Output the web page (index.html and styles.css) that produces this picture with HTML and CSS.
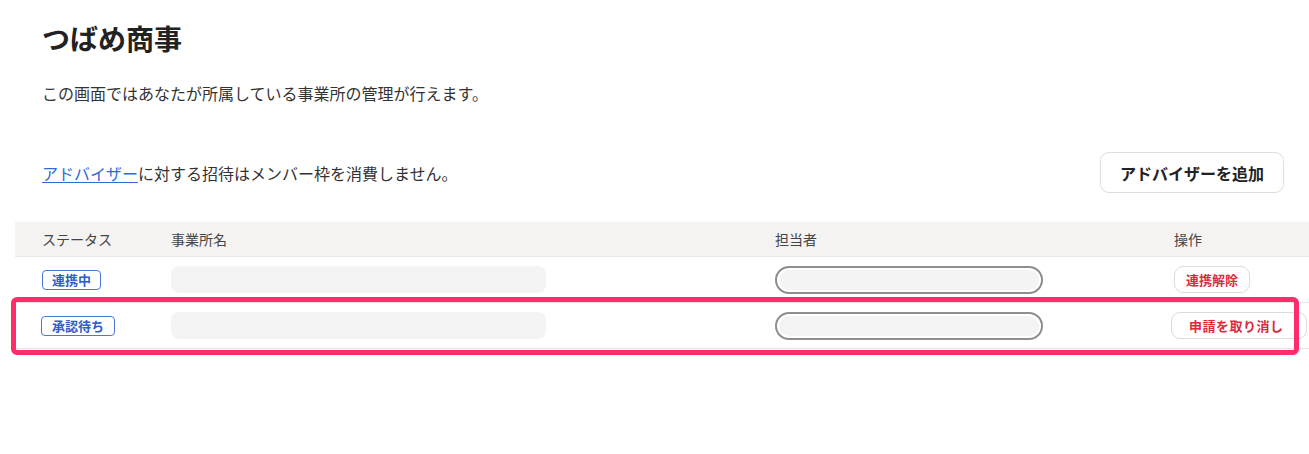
FILE: index.html
```html
<!DOCTYPE html>
<html lang="ja">
<head>
<meta charset="utf-8">
<title>つばめ商事</title>
<link rel="stylesheet" href="styles.css">
</head>
<body>
<div class="page">
  <div class="intro">
    <h1 class="title">つばめ商事</h1>
    <p class="desc">この画面ではあなたが所属している事業所の管理が行えます。</p>
    <div class="toolbar">
      <p class="note"><a class="link" href="#">アドバイザー</a>に対する招待はメンバー枠を消費しません。</p>
      <button class="btn-add" type="button">アドバイザーを追加</button>
    </div>
  </div>
  <div class="table">
    <div class="row head">
      <div class="cell c-status">ステータス</div>
      <div class="cell c-name">事業所名</div>
      <div class="cell c-person">担当者</div>
      <div class="cell c-ops">操作</div>
    </div>
    <div class="row">
      <div class="cell c-status"><span class="badge">連携中</span></div>
      <div class="cell c-name"><span class="ph-name"></span></div>
      <div class="cell c-person"><span class="ph-person"></span></div>
      <div class="cell c-ops"><button class="btn-danger" type="button">連携解除</button></div>
    </div>
    <div class="row-wrap">
      <div class="row">
        <div class="cell c-status"><span class="badge badge-wide">承認待ち</span></div>
        <div class="cell c-name"><span class="ph-name"></span></div>
        <div class="cell c-person"><span class="ph-person"></span></div>
        <div class="cell c-ops"><button class="btn-danger btn-cancel" type="button">申請を取り消し</button></div>
      </div>
      <div class="annot"></div>
    </div>
  </div>
</div>
</body>
</html>
```
FILE: styles.css
```css
* { box-sizing: border-box; }
html, body { margin: 0; padding: 0; background: #fff; }
body {
  font-family: "Noto Sans CJK JP", "Noto Sans", sans-serif;
  color: #333;
}
.page { padding-top: 17px; padding-bottom: 40px; }
.intro { padding: 0 25px 0 42px; }
.title {
  margin: 0;
  font-size: 28px;
  line-height: 42px;
  font-weight: 700;
  color: #222;
}
.desc {
  margin: 22px 0 0;
  font-size: 16px;
  line-height: 24px;
  color: #333;
}
.toolbar {
  margin-top: 47px;
  display: flex;
  align-items: center;
  justify-content: space-between;
}
.note {
  margin: 0;
  font-size: 16px;
  line-height: 24px;
  color: #333;
}
.link { color: #2f6ad6; text-decoration: underline; text-underline-offset: 2px; }
.btn-add {
  height: 41px;
  padding: 0 19px;
  border: 1px solid #dedede;
  border-radius: 9px;
  background: #fff;
  font-family: inherit;
  font-size: 16px;
  font-weight: 700;
  color: #222;
  display: flex;
  align-items: center;
}
.table { margin: 29px 0 0 15px; }
.row {
  display: grid;
  grid-template-columns: 155px 605px 398px 1fr;
  align-items: center;
  height: 46px;
  border-bottom: 1px solid #e7e7e7;
}
.row.head {
  height: 35px;
  background: #f5f3f2;
  border-bottom: 1px solid #ebe8e6;
  font-size: 14px;
  color: #444;
}
.cell { display: flex; align-items: center; }
.c-status { padding-left: 27px; }
.c-name { padding-left: 1px; }
.c-ops { padding-left: 1px; }
.badge {
  display: inline-flex;
  align-items: center;
  height: 20px;
  padding: 0 9px;
  border: 1px solid #4a76d6;
  border-radius: 4px;
  font-size: 13px;
  font-weight: 700;
  color: #2f5ccb;
}
.badge-wide { margin-left: -1px; padding: 0 10px; }
.ph-name {
  display: block;
  width: 375px;
  height: 27px;
  border-radius: 8px;
  background: #f4f4f4;
}
.ph-person {
  display: block;
  width: 268px;
  height: 28px;
  border: 2px solid #8e8e8e;
  border-radius: 14px;
  background: #f4f4f4;
  box-shadow: inset 0 0 0 2px #fff;
}
.btn-danger {
  height: 27px;
  padding: 0 11px;
  border: 1px solid #dcdcdc;
  border-radius: 9px;
  background: #fff;
  font-family: inherit;
  font-size: 13px;
  font-weight: 700;
  color: #dc2a3c;
  display: flex;
  align-items: center;
}
.btn-cancel {
  margin-left: -3px;
  padding: 0 22px 0 17px;
  letter-spacing: 0.5px;
  font-weight: 600;
}
.row-wrap { position: relative; }
.annot {
  position: absolute;
  left: -4px;
  top: -6px;
  width: 1288px;
  height: 58px;
  border: 5px solid #ff2c6c;
  border-radius: 6px;
  pointer-events: none;
}
```
